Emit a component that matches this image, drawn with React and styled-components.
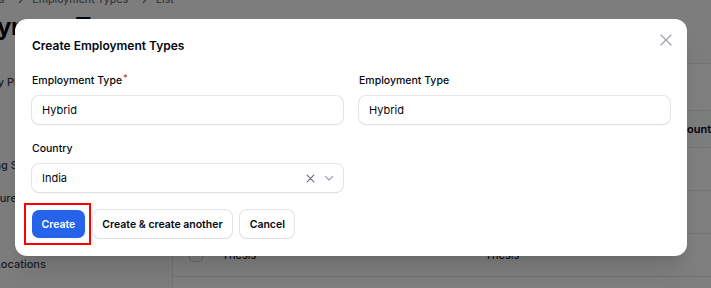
import React from 'react';
import styled, { createGlobalStyle } from 'styled-components';

const GlobalStyle = createGlobalStyle`
  * { box-sizing: border-box; }
  body {
    margin: 0;
    font-family: Inter, "Noto Sans", sans-serif;
    color: #030712;
    -webkit-font-smoothing: antialiased;
  }
`;

const Page = styled.div`
  position: relative;
  width: 711px;
  height: 288px;
  overflow: hidden;
  background: #fafafa;
`;

const Shell = styled.div`
  display: flex;
  flex-direction: column;
  margin: -9px 0 0 -74px;
`;

const Breadcrumbs = styled.nav`
  display: flex;
  align-items: center;
  height: 16px;
  margin-left: 4px;
  font-size: 10.5px;
  font-weight: 500;
  color: #6b7280;
`;

const Crumb = styled.span`
  display: flex;
  align-items: center;
  gap: 8px;
  margin-left: ${({ $first }) => ($first ? 0 : 14)}px;
`;

const Heading = styled.h1`
  margin: 5px 0 0;
  font-size: 24px;
  line-height: 29px;
  font-weight: 700;
  letter-spacing: -0.3px;
  color: #030712;
`;

const Body = styled.div`
  display: flex;
  gap: 24px;
  margin-top: 22px;
`;

const SideNav = styled.ul`
  list-style: none;
  margin: 0;
  padding: 4px 0 0;
  width: 222px;
  flex-shrink: 0;
  display: flex;
  flex-direction: column;
  gap: 4px;
`;

const NavItem = styled.li`
  height: 29px;
  display: flex;
  align-items: center;
  padding-left: 38px;
  font-size: 11px;
  font-weight: 500;
  color: #374151;
  margin-top: ${({ $space }) => $space || 0}px;
`;

const Card = styled.div`
  width: 620px;
  flex-shrink: 0;
  background: #fff;
  border: 1px solid #e5e7eb;
  border-radius: 12px;
  overflow: hidden;
`;

const Toolbar = styled.div`
  height: 46px;
`;

const TableRow = styled.div`
  display: grid;
  grid-template-columns: 49px 263px 194px 1fr;
  align-items: center;
  height: ${({ $head }) => ($head ? 37 : 43)}px;
  border-top: 1px solid #e5e7eb;
  background: ${({ $head }) => ($head ? '#f9fafb' : '#fff')};
  font-size: 11px;
  font-weight: ${({ $head }) => ($head ? 600 : 400)};
  color: #030712;
`;

const CheckCell = styled.div`
  padding-left: 16px;
  display: flex;
`;

const Checkbox = styled.span`
  width: 14px;
  height: 14px;
  border-radius: 4px;
  border: 1px solid #d1d5db;
  background: #fff;
`;

const Backdrop = styled.div`
  position: absolute;
  inset: 0;
  background: rgba(0, 0, 0, 0.5);
`;

const Modal = styled.div`
  position: absolute;
  left: 15px;
  top: 19px;
  width: 672px;
  background: #fff;
  border-radius: 12px;
  padding: 17px 17px 18px;
  box-shadow: 0 20px 25px -5px rgba(0, 0, 0, 0.1), 0 8px 10px -6px rgba(0, 0, 0, 0.1);
`;

const Title = styled.h2`
  margin: 0;
  font-size: 12px;
  line-height: 19px;
  font-weight: 600;
  color: #030712;
`;

const CloseButton = styled.button`
  position: absolute;
  top: 10px;
  right: 10px;
  width: 22px;
  height: 22px;
  padding: 0;
  border: 0;
  background: none;
  display: flex;
  align-items: center;
  justify-content: center;
  color: #9ca3af;
`;

const FormGrid = styled.div`
  display: grid;
  grid-template-columns: 1fr 1fr;
  column-gap: 16px;
  row-gap: 17px;
  margin-top: 18px;
`;

const Field = styled.div`
  display: flex;
  flex-direction: column;
  gap: 7px;
`;

const Label = styled.label`
  font-size: 10.5px;
  line-height: 16px;
  font-weight: 500;
  color: #030712;
`;

const Required = styled.sup`
  color: #dc2626;
  font-size: 9px;
  font-weight: 500;
  margin-left: 1px;
  vertical-align: 3px;
  line-height: 0;
`;

const Input = styled.div`
  height: 28px;
  border-radius: 7px;
  box-shadow: 0 0 0 1px rgba(3, 7, 18, 0.1), 0 1px 2px rgba(0, 0, 0, 0.05);
  display: flex;
  align-items: center;
  padding: 0 9px 0 10px;
  font-size: 11px;
  color: #030712;
`;

const Value = styled.span`
  flex: 1;
`;

const SelectIcons = styled.span`
  display: flex;
  align-items: center;
  gap: 9px;
  color: #6b7280;
`;

const Footer = styled.div`
  display: flex;
  gap: 8px;
  margin-top: 18px;
`;

const Button = styled.button`
  height: 28px;
  padding: 0 9.5px;
  border: 0;
  border-radius: 7px;
  font-family: inherit;
  font-size: 10.5px;
  font-weight: 600;
  background: ${({ $primary }) => ($primary ? '#2563eb' : '#fff')};
  color: ${({ $primary }) => ($primary ? '#fff' : '#030712')};
  box-shadow: ${({ $primary }) =>
    $primary ? '0 1px 2px rgba(0,0,0,0.05)' : '0 0 0 1px rgba(3,7,18,0.1), 0 1px 2px rgba(0,0,0,0.05)'};
`;

const Highlight = styled.span`
  position: relative;
  display: flex;
  &::after {
    content: '';
    position: absolute;
    left: -8px;
    right: -6px;
    top: -7px;
    bottom: -7px;
    border: 2px solid #f00;
    pointer-events: none;
  }
`;

const Chevron = () => (
  <svg width="6" height="10" viewBox="0 0 6 10" fill="none" stroke="currentColor" strokeWidth="1.2" strokeLinecap="round" strokeLinejoin="round">
    <path d="M1.5 1.5 4.5 5 1.5 8.5" />
  </svg>
);

const rows = [
  { name: 'Full Time', code: 'Full Time' },
  { name: 'Part Time', code: 'Part Time' },
  { name: 'Thesis', code: 'Thesis' },
  { name: 'Internship', code: 'Internship' },
];

export default function App() {
  return (
    <Page>
      <GlobalStyle />
      <Shell>
        <Breadcrumbs>
          <Crumb $first>Configurations</Crumb>
          <Crumb><Chevron />Employment Types</Crumb>
          <Crumb><Chevron />List</Crumb>
        </Breadcrumbs>
        <Heading>Employment Types</Heading>
        <Body>
          <SideNav>
            <NavItem>Activity Plans</NavItem>
            <NavItem $space={50}>Working Schedules</NavItem>
            <NavItem>Departure Reasons</NavItem>
            <NavItem>Jobs</NavItem>
            <NavItem>Work Locations</NavItem>
          </SideNav>
          <Card>
            <Toolbar />
            <TableRow $head>
              <CheckCell><Checkbox /></CheckCell>
              <span>Name</span>
              <span>Code</span>
              <span>Country</span>
            </TableRow>
            {rows.map((r) => (
              <TableRow key={r.name}>
                <CheckCell><Checkbox /></CheckCell>
                <span>{r.name}</span>
                <span>{r.code}</span>
                <span />
              </TableRow>
            ))}
          </Card>
        </Body>
      </Shell>

      <Backdrop>
        <Modal>
          <Title>Create Employment Types</Title>
          <CloseButton aria-label="Close">
            <svg width="22" height="22" viewBox="0 0 24 24" fill="none" stroke="currentColor" strokeWidth="1.3" strokeLinecap="round">
              <path d="M6.5 17.5 17.5 6.5M6.5 6.5l11 11" />
            </svg>
          </CloseButton>
          <FormGrid>
            <Field>
              <Label>Employment Type<Required>*</Required></Label>
              <Input><Value>Hybrid</Value></Input>
            </Field>
            <Field>
              <Label>Employment Type</Label>
              <Input><Value>Hybrid</Value></Input>
            </Field>
            <Field>
              <Label>Country</Label>
              <Input>
                <Value>India</Value>
                <SelectIcons>
                  <svg width="9" height="9" viewBox="0 0 9 9" fill="none" stroke="#6b7280" strokeWidth="1.2" strokeLinecap="round">
                    <path d="M1.2 1.2l6.6 6.6M7.8 1.2l-6.6 6.6" />
                  </svg>
                  <svg width="10" height="10" viewBox="0 0 10 10" fill="none" stroke="#9ca3af" strokeWidth="1.2" strokeLinecap="round" strokeLinejoin="round">
                    <path d="M1.5 3.5 5 7l3.5-3.5" />
                  </svg>
                </SelectIcons>
              </Input>
            </Field>
          </FormGrid>
          <Footer>
            <Highlight>
              <Button $primary>Create</Button>
            </Highlight>
            <Button>Create &amp; create another</Button>
            <Button>Cancel</Button>
          </Footer>
        </Modal>
      </Backdrop>
    </Page>
  );
}
